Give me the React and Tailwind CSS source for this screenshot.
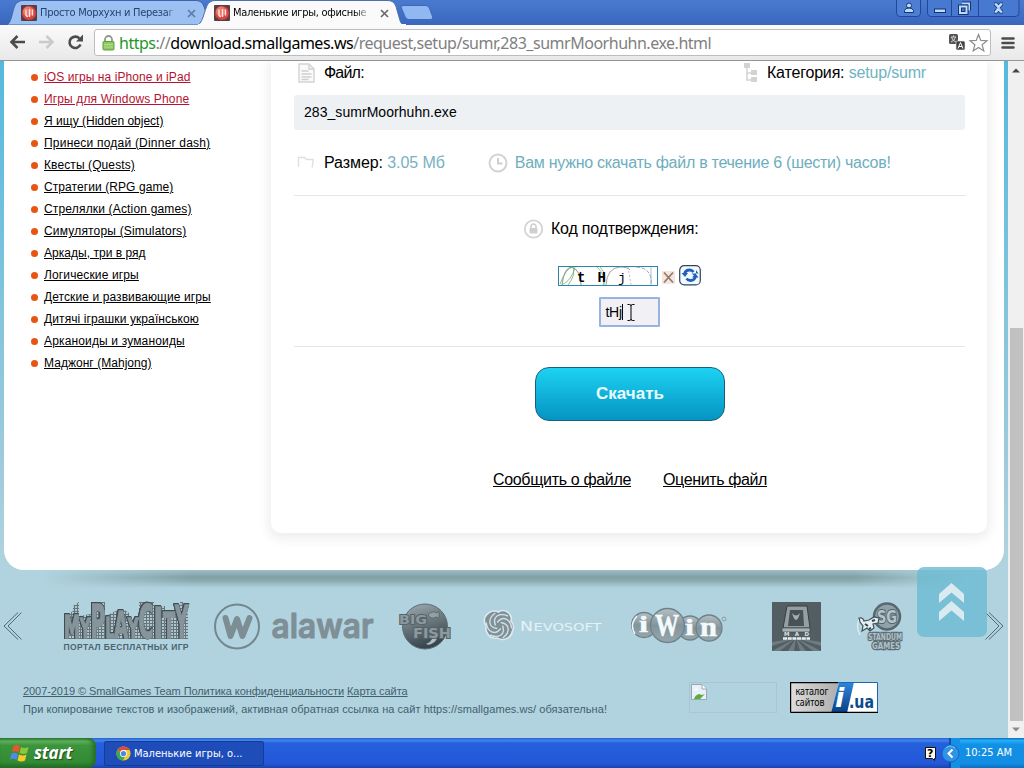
import React from "react";

const ui = "font-['DejaVu_Sans_Condensed','DejaVu_Sans',sans-serif] [font-stretch:condensed]";

const categories = [
  ["iOS игры на iPhone и iPad", "text-[#b5122f] tracking-[0.08px]"],
  ["Игры для Windows Phone", "text-[#b5122f] tracking-[0.14px]"],
  ["Я ищу (Hidden object)", "text-black"],
  ["Принеси подай (Dinner dash)", "text-black tracking-[0.21px]"],
  ["Квесты (Quests)", "text-black tracking-[0.1px]"],
  ["Стратегии (RPG game)", "text-black tracking-[0.08px]"],
  ["Стрелялки (Action games)", "text-black tracking-[0.17px]"],
  ["Симуляторы (Simulators)", "text-black tracking-[0.18px]"],
  ["Аркады, три в ряд", "text-black tracking-[0.03px]"],
  ["Логические игры", "text-black tracking-[0.13px]"],
  ["Детские и развивающие игры", "text-black tracking-[0.09px]"],
  ["Дитячі іграшки українською", "text-black tracking-[0.1px]"],
  ["Арканоиды и зуманоиды", "text-black tracking-[0.15px]"],
  ["Маджонг (Mahjong)", "text-black tracking-[0.04px]"],
];

function Favicon() {
  return (
    <svg width="16" height="16" viewBox="0 0 16 16" className="shrink-0">
      <rect width="16" height="16" rx="1" fill="#5c3c45" />
      <circle cx="8" cy="8" r="7" fill="#d8473f" />
      <circle cx="7" cy="6.5" r="5" fill="#ee8a7c" opacity=".75" />
      <path d="M5 4.500v5q0 2 2 2M8.500 4v8M11.500 4.500v6" stroke="#ffe3dc" strokeWidth="1.400" fill="none" />
    </svg>
  );
}

function Cross({ color }) {
  return (
    <svg width="9" height="9" viewBox="0 0 9 9" className="shrink-0">
      <path d="M1 1l7 7M8 1L1 8" stroke={color} strokeWidth="1.700" />
    </svg>
  );
}

function TitleBar() {
  return (
    <div className="relative h-[25px] shrink-0 overflow-hidden bg-gradient-to-b from-[#4a7ad0] to-[#3a66be]">
      <svg width="1024" height="25" className="absolute left-0 top-0">
        <path d="M7 25C13 22 12 4 18 2q2-1.500 5-1.500H196q6 0 8 6l6 18.500z" fill="#9dc0f2" stroke="#3c65ae" strokeWidth="1" />
        <path d="M401 7q0-1.500 3-1.500h22q2.500 0 3.500 3l3 8q1 3-2 3H409q-3 0-4-3z" fill="#8fb9f0" stroke="#3f69b5" />
        <path d="M198 25C204 22 205 4 210 2q2-1.500 5-1.500H388q6 0 8 6l4 14q1 4.500 6 4.500z" fill="#fafafa" stroke="#4c70ad" strokeWidth="1" />
        <rect x="198" y="24" width="208" height="2" fill="#fafafa" />
        <g fill="none" stroke="#22479a">
          <path d="M896.500 0v13q0 3.500 3.500 3.500h17q3.500 0 3.500-3.500V0" fill="#4d7ed4" />
          <path d="M927.500 0v13q0 3.500 3.500 3.500h84q4 0 4-3.500V0M951.500 0v16M978.500 0v16" fill="#4879d0" />
        </g>
        <g fill="#b9dcff" stroke="#16316e" strokeWidth="1">
          <circle cx="909" cy="5.500" r="2.500" />
          <path d="M904.500 12.500v-2q1-2.500 4.500-2.500t4.500 2.500v2z" />
          <rect x="934.500" y="9" width="11" height="3.500" />
        </g>
        <g fill="none" strokeLinejoin="miter">
          <path d="M962 3.500h7v7" stroke="#16316e" strokeWidth="4" />
          <path d="M962 3.500h7v7" stroke="#b9dcff" strokeWidth="2" />
          <rect x="960" y="6.500" width="6.500" height="6.500" stroke="#16316e" strokeWidth="4" />
          <rect x="960" y="6.500" width="6.500" height="6.500" stroke="#b9dcff" strokeWidth="2" />
          <path d="M994 4h2.500l2 2.500 2-2.500h2.500M994 12h2.500l2-2.500 2 2.500h2.500M995.500 4.500l6 7M1001.500 4.500l-6 7" stroke="#16316e" strokeWidth="3" />
          <path d="M994.500 4h2l2 2.500 2-2.500h2M994.500 12h2l2-2.500 2 2.500h2M995.500 4.500l6 7M1001.500 4.500l-6 7" stroke="#b9dcff" strokeWidth="1.500" />
        </g>
      </svg>
      <div className={"relative flex h-[26px] items-center pl-[21px] text-[11px] tracking-[-0.28px] " + ui}>
        <Favicon />
        <span className="ml-[3px] w-[137px] overflow-hidden whitespace-nowrap text-[#23446f] [mask-image:linear-gradient(90deg,#000_92%,transparent)]">Просто Морхухн и Перезаг</span>
        <span className="ml-[10px]"><Cross color="#5c7ca8" /></span>
        <span className="ml-[18px]"><Favicon /></span>
        <span className="ml-[3px] w-[138px] overflow-hidden whitespace-nowrap text-black [mask-image:linear-gradient(90deg,#000_88%,transparent)]">Маленькие игры, офисные</span>
        <span className="ml-[9px]"><Cross color="#6b6b6b" /></span>
      </div>
    </div>
  );
}

function Toolbar() {
  return (
    <div className="flex h-[36px] shrink-0 items-center border-b border-[#949494] bg-gradient-to-b from-[#fafafa] to-[#e9e9e9] pl-[9px]">
      <svg width="76" height="22" viewBox="0 0 76 22" className="shrink-0">
        <path d="M16 10H3M8.500 4L2.500 10l6 6" fill="none" stroke="#4c4c4c" strokeWidth="2.600" />
        <path d="M30 10H43M37.500 4l6 6-6 6" fill="none" stroke="#cbcbcb" strokeWidth="2.600" />
        <path d="M71.500 12.500A5.700 5.700 0 1 1 70.500 6.500" fill="none" stroke="#4c4c4c" strokeWidth="2.600" />
        <path d="M74 2.500v7h-7z" fill="#4c4c4c" />
      </svg>
      <div className="ml-[9px] flex h-[27px] w-[897px] items-center rounded-[3px] border border-[#bdbdbd] bg-white pl-[7px]">
        <svg width="13" height="16" viewBox="0 0 13 16" className="shrink-0">
          <path d="M3 8V4.500a3.500 3.500 0 0 1 7 0V8" fill="none" stroke="#8e9a8a" strokeWidth="1.800" />
          <rect x="1" y="6.500" width="11" height="8.500" rx="1" fill="#8cc95f" stroke="#5f9c43" />
          <path d="M2 9.500h9M2 12h9" stroke="#b4e08f" />
        </svg>
        <span className="ml-[4px] w-[829px] whitespace-nowrap font-['Noto_Sans',sans-serif] text-[16px] leading-[24px] tracking-[-0.48px] text-[#808080]">
          <span className="text-[#23952c]">https</span>://<span className="text-black">download.smallgames.ws</span>/request,setup/sumr,283_sumrMoorhuhn.exe.html
        </span>
        <svg width="42" height="20" viewBox="0 0 42 20" className="shrink-0">
          <rect x="1" y="1" width="9" height="10" rx="1.500" fill="#555" />
          <path d="M3 4h5M5.500 2.500v1.500M7.500 4q-1 4-4.500 5M3.500 4q1 4 4.500 5" stroke="#ddd" strokeWidth=".9" fill="none" />
          <rect x="8" y="8" width="9" height="9" rx="1.500" fill="#444" stroke="#eee" strokeWidth=".6" />
          <path d="M10 15.500l2.500-6 2.500 6M11 13.500h3" stroke="#fff" strokeWidth="1" fill="none" />
          <path d="M30.500 1.500l2.300 5.900 6.200.3-4.900 4 1.700 6.200-5.300-3.500-5.300 3.500 1.700-6.200-4.900-4 6.200-.3z" fill="#fff" stroke="#8d8d8d" strokeWidth="1.200" />
        </svg>
      </div>
      <svg width="14" height="14" viewBox="0 0 14 14" className="ml-[10px]">
        <path d="M1.500 2.500h11M1.500 7h11M1.500 11.500h11" stroke="#4c4c4c" strokeWidth="2.500" strokeLinecap="round" />
      </svg>
    </div>
  );
}

function Sidebar() {
  return (
    <ul className="w-[267px] shrink-0 pl-[27px] pt-[5px]">
      {categories.map(([name, look]) => (
        <li key={name} className="flex h-[22px] items-center text-[12px]">
          <i className="mr-[6px] size-[7px] rounded-full bg-[#e85512]" />
          <a className={"whitespace-nowrap underline " + look}>{name}</a>
        </li>
      ))}
    </ul>
  );
}

function Card() {
  return (
    <main className="mb-[37px] flex h-[472px] w-[716px] flex-col rounded-b-[10px] bg-white px-[23px] text-[16px] text-black shadow-[0_3px_12px_3px_rgba(0,0,0,0.07)]">
      <div className="flex h-[23px] items-center">
        <svg width="24" height="20" viewBox="0 0 24 20" className="mr-[6px]">
          <path d="M5 1h10l5 5v13H5z" fill="#fafafa" stroke="#d4d4d4" strokeWidth="1.500" />
          <path d="M15 1v5h5M7.500 8h7M7.500 11h10M7.500 14h10M7.500 16.500h7" fill="none" stroke="#cfcfcf" strokeWidth="1.300" />
        </svg>
        <span className="tracking-[-0.8px]">Файл:</span>
        <svg width="16" height="20" viewBox="0 0 16 20" className="ml-auto mr-[8px]">
          <path d="M1 0h6v5H1zM8 7h6v5H8zM8 14h6v5H8z" fill="#d3d3d3" />
          <path d="M4 4v13h5M4 10h5" fill="none" stroke="#d3d3d3" strokeWidth="1.500" />
        </svg>
        <span className="mr-[38px] tracking-[-0.18px]">Категория: <span className="text-[#6fb3c1]">setup/sumr</span></span>
      </div>
      <div className="mt-[11px] flex h-[35px] w-[671px] items-center rounded-[3px] bg-[#edf1f4] pl-[10px] text-[14px] tracking-[0.05px]">283_sumrMoorhuhn.exe</div>
      <div className="mt-[19px] flex h-[28px] items-center">
        <svg width="24" height="20" viewBox="0 0 24 20" className="mr-[6px]">
          <path d="M4.500 14V4.500h6l2 2h6.500v3l-1 5" fill="none" stroke="#dedede" strokeWidth="1.300" />
        </svg>
        <span className="tracking-[-0.08px]">Размер: <span className="text-[#78b1c0]">3.05 Мб</span></span>
        <svg width="20" height="20" viewBox="0 0 20 20" className="ml-[43px] mr-[7px]">
          <circle cx="10" cy="10" r="8.500" fill="#fff" stroke="#d3d3d3" strokeWidth="2" />
          <path d="M10 5v5.500h4.500" fill="none" stroke="#cfcfcf" strokeWidth="2" />
        </svg>
        <span className="tracking-[-0.27px] text-[#6eaebd]">Вам нужно скачать файл в течение 6 (шести) часов!</span>
      </div>
      <div className="mt-[18px] h-px w-[672px] bg-[#e6e6e6]" />
      <div className="mt-[20px] flex h-[26px] items-center pl-[229px]">
        <svg width="20" height="20" viewBox="0 0 20 20" className="mr-[8px]">
          <circle cx="10.500" cy="10" r="8.700" fill="#fff" stroke="#d4d4d4" strokeWidth="1.800" />
          <rect x="6.500" y="9" width="8" height="5.500" rx="1" fill="#cfcfcf" />
          <path d="M8 9V7.500a2.500 2.500 0 0 1 5 0V9" fill="none" stroke="#cfcfcf" strokeWidth="1.500" />
        </svg>
        <span className="tracking-[-0.22px]">Код подтверждения:</span>
      </div>
      <div className="mt-[22px] flex h-[23px] items-center pl-[264px]">
        <svg width="100" height="20" viewBox="0 0 100 20">
          <rect x=".5" y=".5" width="99" height="19" fill="#fff" stroke="#2c83ad" />
          <g fill="none" strokeWidth=".8">
            <path d="M4 19Q6 1 14 1q9 4 9 18" stroke="#777" />
            <path d="M2 18Q8 2 15 1q3 8-5 18M4 19Q14 14 17 1" stroke="#6fae72" />
            <path d="M48 19Q49 2 62 1q8 0 10 3" stroke="#888" />
            <path d="M42 1q8 8 3 18M39 1q9 8 7 18" stroke="#79b57c" />
            <path d="M70 1l3 18" stroke="#aaa" strokeDasharray="2 2" />
            <path d="M78 1q17 1 15 18" stroke="#888" strokeDasharray="4 1.500" />
            <path d="M93 1v18" stroke="#88b7d5" />
          </g>
          <g fontFamily="Liberation Mono, monospace" fontSize="14" fill="#000">
            <text x="19" y="16" fontWeight="700">t</text>
            <text x="39.500" y="16" fontWeight="700">H</text>
            <text x="60" y="16" fontSize="13">j</text>
          </g>
        </svg>
        <svg width="13" height="15" viewBox="0 0 13 15" className="ml-[4px] mt-[4px]">
          <rect width="13" height="13" y="1" fill="#f6e7de" />
          <path d="M2 2.500l9 10M11 2.500l-9 10" stroke="#927b6e" strokeWidth="1.800" />
        </svg>
        <svg width="22" height="21" viewBox="0 0 22 21" className="ml-[4px]">
          <rect x=".7" y=".7" width="20.600" height="19.200" rx="4.500" fill="#f5f8fd" stroke="#30455f" strokeWidth="1.200" />
          <path d="M5.500 9Q6.500 5 10.500 5q2.500 0 4 2M16.500 11.500Q15.500 15.500 11.500 15.500q-2.500 0-4-2" fill="none" stroke="#1c62bd" strokeWidth="2.800" />
          <path d="M2.500 8h6.500L6 12zM12.500 8.500h7L17 5v7z" fill="#1c62bd" />
          <path d="M13 12.500h6.500L16.500 8.500z" fill="#1c62bd" />
        </svg>
      </div>
      <div className="mt-[10px] flex h-[30px] w-[61px] items-center self-center rounded-[1px] border-2 border-[#98b3e0] bg-[#f0f0f5] pl-[5px] text-[14px]">
        <span className="tracking-[-0.3px]">tHj</span>
        <i className="h-[16px] w-px bg-black" />
        <svg width="8" height="17" viewBox="0 0 8 17" className="ml-[4px] shrink-0">
          <path d="M.5.5h2q1.500 0 1.500 1.500 0-1.500 1.500-1.500h2M4 2v13M.5 16.500h2Q4 16.500 4 15q0 1.500 1.500 1.500h2" fill="none" stroke="#000" />
        </svg>
      </div>
      <div className="mt-[19px] h-px w-[671px] bg-[#e6e6e6]" />
      <button className="ml-[2px] mt-[20px] h-[54px] w-[190px] self-center rounded-[14px] border border-[#17627b] bg-gradient-to-b from-[#1dd2f2] to-[#0594c3] text-[17px] font-bold text-[#e8fbff]">Скачать</button>
      <div className="mt-[48px] flex h-[22px] items-center pl-[199px] underline">
        <a className="tracking-[-0.33px]">Сообщить о файле</a>
        <a className="ml-[32px] tracking-[-0.38px]">Оценить файл</a>
      </div>
    </main>
  );
}

function Chevrons({ flip }) {
  return (
    <svg width="19" height="30" viewBox="0 0 19 30" className={"shrink-0 " + (flip ? "rotate-180" : "")}>
      <path d="M15 1.500L1 15l14 13.500M18.500 1.500L5 15l13.500 13.500" fill="none" stroke="#4e6a76" strokeWidth="1" />
    </svg>
  );
}

function Logos() {
  return (
    <div className="flex h-[60px] items-center pl-[3px]">
      <Chevrons />
      <svg width="128" height="52" viewBox="0 0 128 52" className="ml-[41px] shrink-0 overflow-visible">
        <defs>
          <pattern id="windows" width="3" height="3" patternUnits="userSpaceOnUse">
            <rect width="3" height="3" fill="#66757b" />
            <rect width="2" height="2" fill="#b0c6ce" />
          </pattern>
        </defs>
        <path d="M1 39V17l9-6v-5l6-4v14l12-2V2h14v15l8-5 10-3 6 4v6h10V2h15v4h11v7h15V2h3v10h5v27z" fill="url(#windows)" />
        <g
          fontFamily="DejaVu Sans, sans-serif"
          fontWeight="700"
          fill="#86959b"
          stroke="#86959b"
          strokeWidth="1.600"
          className="[filter:drop-shadow(0.6px_0_0_#414e54)_drop-shadow(-0.6px_0_0_#414e54)_drop-shadow(0_-0.5px_0_#414e54)]"
        >
          <text x="1" y="38" fontSize="32" textLength="16" lengthAdjust="spacingAndGlyphs">M</text>
          <text x="17" y="38" fontSize="27" textLength="10.500" lengthAdjust="spacingAndGlyphs">Y</text>
          <text x="27.500" y="38" fontSize="47" textLength="15" lengthAdjust="spacingAndGlyphs">P</text>
          <text x="42.500" y="38" fontSize="28" textLength="8.500" lengthAdjust="spacingAndGlyphs">L</text>
          <text x="51" y="38" fontSize="37" textLength="14" lengthAdjust="spacingAndGlyphs">A</text>
          <text x="65" y="38" fontSize="27" textLength="10.500" lengthAdjust="spacingAndGlyphs">Y</text>
          <text x="75.500" y="38" fontSize="46" textLength="15" lengthAdjust="spacingAndGlyphs">C</text>
          <text x="90.500" y="38" fontSize="43" textLength="9.500" lengthAdjust="spacingAndGlyphs">I</text>
          <text x="100" y="38" fontSize="36" textLength="12" lengthAdjust="spacingAndGlyphs">T</text>
          <text x="112" y="38" fontSize="44" textLength="13.500" lengthAdjust="spacingAndGlyphs">Y</text>
        </g>
        <text x=".5" y="50" fontFamily="Liberation Sans, sans-serif" fontWeight="700" fontSize="8.500" textLength="125" fill="#4b6370">ПОРТАЛ БЕСПЛАТНЫХ ИГР</text>
      </svg>
      <svg width="162" height="48" viewBox="0 0 162 48" className="ml-[22px] shrink-0">
        <circle cx="24" cy="24.500" r="22" fill="none" stroke="#73878f" strokeWidth="2" />
        <path d="M12.500 16l5 18 6.500-17 5.500 17 7-18" fill="none" stroke="#7d8d94" strokeWidth="6" strokeLinecap="round" strokeLinejoin="round" />
        <text x="58.500" y="36" fontFamily="Inter, sans-serif" fontWeight="600" fontSize="34" textLength="102" lengthAdjust="spacingAndGlyphs" fill="#7e8f97" stroke="#7e8f97" strokeWidth="1" strokeLinejoin="round">alawar</text>
      </svg>
      <svg width="54" height="48" viewBox="0 0 54 48" className="ml-[23px] shrink-0 overflow-visible">
        <defs>
          <linearGradient id="ball" x1="0" y1="0" x2=".3" y2="1">
            <stop offset="0" stopColor="#a0aeb3" />
            <stop offset=".5" stopColor="#6b787e" />
            <stop offset="1" stopColor="#39464d" />
          </linearGradient>
        </defs>
        <circle cx="27" cy="24.500" r="22.500" fill="url(#ball)" stroke="#5d6b71" />
        <path d="M28 42q9-3 7-16 8 10 0 15-4 3-7 1z" fill="#b0bfc4" />
        <g fontFamily="DejaVu Sans, sans-serif" fontWeight="700" fill="#8c999e" stroke="#56646a" strokeWidth="2" paintOrder="stroke">
          <text x="1" y="22" fontSize="13" textLength="28" lengthAdjust="spacingAndGlyphs">BIG</text>
          <text x="15" y="36" fontSize="14" textLength="38" lengthAdjust="spacingAndGlyphs">FISH</text>
        </g>
        <path d="M30 13q4-5 9-2l2-2v7l-3-1q-5 3-8-2z" fill="#93a1a6" stroke="#55636a" strokeWidth=".8" />
      </svg>
      <svg width="120" height="34" viewBox="0 0 120 34" className="ml-[31px] shrink-0">
        <path d="M15.500 3q4-3 9 0 5 4 3.500 9 4 4 1.500 10-1 6-7 8-5 1.500-8-1-6 1-9-3-4-5-2-9Q0 13 2 8q4-6 9-6 3 0 4.500 1z" fill="#809097" stroke="#dbeaf0" strokeWidth="1.600" />
        <g fill="none" stroke="#d0dfe5" strokeWidth="1.400">
          <path d="M12.500 16.500C9 8 16 3 25 7" />
          <path d="M12.500 16.500C9 8 16 3 25 7" transform="rotate(60 16 16.500)" />
          <path d="M12.500 16.500C9 8 16 3 25 7" transform="rotate(120 16 16.500)" />
          <path d="M12.500 16.500C9 8 16 3 25 7" transform="rotate(180 16 16.500)" />
          <path d="M12.500 16.500C9 8 16 3 25 7" transform="rotate(240 16 16.500)" />
          <path d="M12.500 16.500C9 8 16 3 25 7" transform="rotate(300 16 16.500)" />
        </g>
        <g fontFamily="DejaVu Sans, sans-serif" fill="#e6f1f5">
          <text x="37" y="22" fontSize="14" textLength="13" lengthAdjust="spacingAndGlyphs">N</text>
          <text x="50.500" y="22" fontSize="11" textLength="68" lengthAdjust="spacingAndGlyphs">EVOSOFT</text>
        </g>
      </svg>
      <svg width="97" height="38" viewBox="0 0 97 38" className="ml-[28px] shrink-0">
        <defs>
          <linearGradient id="bubble" x1="0" y1="0" x2="0" y2="1">
            <stop offset="0" stopColor="#b4bfc3" />
            <stop offset=".5" stopColor="#82949b" />
            <stop offset="1" stopColor="#97a6ac" />
          </linearGradient>
        </defs>
        <g fill="url(#bubble)" stroke="#6f828a" strokeWidth="1.300">
          <circle cx="13" cy="18" r="12.500" /><circle cx="59" cy="21" r="12" /><circle cx="78" cy="21" r="13" /><circle cx="36.500" cy="18.500" r="17" />
        </g>
        <path d="M4 27q-6-9 2-18" fill="none" stroke="#eef6f8" strokeWidth="1.500" />
        <g fontFamily="Liberation Serif, serif" fontWeight="700" fill="#f4fafb" stroke="#f4fafb" strokeWidth=".5">
          <text x="8" y="25" fontSize="24" textLength="9" lengthAdjust="spacingAndGlyphs">i</text>
          <text x="24" y="29" fontSize="31" textLength="24" lengthAdjust="spacingAndGlyphs">W</text>
          <text x="54" y="28" fontSize="24" textLength="9" lengthAdjust="spacingAndGlyphs">i</text>
          <text x="69" y="28.500" fontSize="27" textLength="17" lengthAdjust="spacingAndGlyphs">n</text>
        </g>
        <circle cx="93" cy="12" r="2" fill="none" stroke="#7d929b" strokeWidth=".8" />
      </svg>
      <svg width="49" height="49" viewBox="0 0 49 49" className="ml-[44px] shrink-0">
        <rect width="49" height="49" fill="#535e62" />
        <path d="M24 36L0 49h8zM24 36L16 49h6zM24 36l4 13h6zM24 36l17 13h8zM24 36L0 40v4zM24 36l25 4v4z" fill="#6e7b80" />
        <path d="M15 4h20l3 22H11z" fill="#939fa3" stroke="#353f43" />
        <path d="M18 8h13l1 16H16z" fill="#485256" />
        <path d="M10 26h28v4H10z" fill="#a7b1b4" stroke="#3d474b" strokeWidth=".7" />
        <path d="M20 11q4 5 8 0-2 7-4 7t-4-7" fill="#a3afb3" />
        <text x="12" y="34" fontFamily="DejaVu Sans, sans-serif" fontWeight="700" fontSize="5.500" textLength="25" fill="#d7e0e3">MAD</text>
        <path d="M11 36.500h27" stroke="#e7eef0" strokeWidth="2.500" strokeDasharray="4 .7" />
      </svg>
      <svg width="46" height="50" viewBox="0 0 46 50" className="ml-[36px] shrink-0 overflow-visible">
        <circle cx="30" cy="15.500" r="13" fill="#8fa1a9" stroke="#59686f" strokeWidth="2.500" />
        <text x="20" y="22" fontFamily="DejaVu Sans, sans-serif" fontWeight="700" fontSize="18" textLength="20" lengthAdjust="spacingAndGlyphs" fill="#b3c5cb" stroke="#54636b" strokeWidth="2" paintOrder="stroke">SG</text>
        <path d="M3 16Q-2 25 3 34" fill="none" stroke="#edf6f9" />
        <path d="M2 17q4-1 5 3l5-1 5-3 5 1-1 5-5 1 1 4-4 3-3-3-5 3 1-5-3-4z" fill="#e4eef1" stroke="#41515a" strokeWidth="1.200" />
        <path d="M8 23l3 2m4-5l3-1m-6 9l2-1" stroke="#35454d" strokeWidth="2" />
        <g fontFamily="DejaVu Sans, sans-serif" fontWeight="700" fontSize="8" fill="#b2c2c8" stroke="#5d6e76" strokeWidth="2.400" paintOrder="stroke">
          <text x="11" y="39" textLength="34" lengthAdjust="spacingAndGlyphs">STANDUM</text>
          <text x="15" y="48" textLength="28" lengthAdjust="spacingAndGlyphs">GAMES</text>
        </g>
      </svg>
      <span className="ml-[82px]"><Chevrons flip /></span>
    </div>
  );
}

function SiteFooter() {
  return (
    <div className="flex h-[60px] pl-[23px] text-[11px] text-[#435f6e]">
      <div className="w-[666px] whitespace-nowrap pt-px leading-[18px]">
        <div className="tracking-[-0.07px]"><a className="underline">2007-2019 © SmallGames Team Политика конфиденциальности</a> <a className="underline">Карта сайта</a></div>
        <div className="tracking-[0.055px]">При копирование текстов и изображений, активная обратная ссылка на сайт https://smallgames.ws/ обязательна!</div>
      </div>
      <div className="mt-px h-[31px] w-[88px] border border-[#a8c7d2] pl-px pt-px">
        <svg width="16" height="16" viewBox="0 0 16 16">
          <path d="M.5.5H11l4.500 4.500v10.500H.5z" fill="#e7f0fb" stroke="#9aa7ad" />
          <path d="M11 .5V5h4.500" fill="#fff" stroke="#9aa7ad" />
          <path d="M3 15q1-4 5-5l3 1 3-1-5 5z" fill="#5cad39" />
          <path d="M3 6q2-3 4 0z" fill="#fff" />
        </svg>
      </div>
      <svg width="88" height="31" viewBox="0 0 88 31" className="ml-[13px] mt-px">
        <defs>
          <linearGradient id="plate"><stop offset="0" stopColor="#dedede" /><stop offset="1" stopColor="#adadad" /></linearGradient>
          <linearGradient id="stripe" x1="0" y1="0" x2="0" y2="1"><stop offset="0" stopColor="#2e86e0" /><stop offset="1" stopColor="#063f86" /></linearGradient>
        </defs>
        <rect width="88" height="31" fill="#fff" />
        <path d="M0 0h49l-8 31H0z" fill="url(#plate)" />
        <path d="M49 0h15l-7 31H41z" fill="url(#stripe)" />
        <path d="M.5 30.500V.5H48M.5 30.500H88" stroke="#000" strokeWidth="1.400" fill="none" />
        <path d="M48 .5h39.500V30" stroke="#1c66ad" fill="none" />
        <g fontFamily="Noto Sans, sans-serif" fontSize="10.500" fill="#000">
          <text x="5.500" y="13" textLength="33" lengthAdjust="spacingAndGlyphs">каталог</text>
          <text x="5.500" y="24" textLength="29" lengthAdjust="spacingAndGlyphs">сайтов</text>
        </g>
        <text x="45" y="25" fontFamily="DejaVu Sans, sans-serif" fontWeight="700" fontStyle="italic" fontSize="27" fill="#fff">i</text>
        <text x="59" y="26" fontFamily="DejaVu Sans, sans-serif" fontWeight="700" fontSize="17" textLength="25" lengthAdjust="spacingAndGlyphs" fill="#0c4b8c">.ua</text>
      </svg>
    </div>
  );
}

function Scrollbar() {
  return (
    <div className="flex w-[16px] shrink-0 flex-col items-center bg-[#f0f0f0] pb-[6px] pt-[7px]">
      <svg width="8" height="5" viewBox="0 0 8 5"><path d="M0 4.500L4 .5l4 4z" fill="#454545" /></svg>
      <div className="mt-[255px] h-[393px] w-[13px] bg-[#c1c1c1]" />
      <svg width="8" height="5" viewBox="0 0 8 5" className="mt-auto"><path d="M0 .5l4 4 4-4z" fill="#8a8a8a" /></svg>
    </div>
  );
}

function Taskbar() {
  return (
    <div className="flex h-[30px] shrink-0 bg-[linear-gradient(#2a62cf,#3f83ee_8%,#2560dc_18%,#2357d8_85%,#1a43b0)] text-white">
      <div className="flex w-[96px] items-center rounded-r-[8px] bg-[linear-gradient(#2f7a31,#5fb35c_10%,#3c943c_25%,#328c33_80%,#236b25)] pl-[10px] shadow-[inset_-3px_0_4px_#246b2b]">
        <svg width="20" height="20" viewBox="0 0 20 20">
          <path d="M3.500 3Q7 1 10 3.500L8.500 9.500Q5.500 7.500 2 9z" fill="#e8562a" />
          <path d="M11 4q3 2 7.500 0L17 10q-3.500 2-7.500 0z" fill="#8cc63c" />
          <path d="M1.500 10.500q3.500-1.500 6.500.5L6.500 17Q3.500 15 0 16.500z" fill="#5288e8" />
          <path d="M9 11.500q4 2 7.500 0L15 17.500q-3.500 2-7.500 0z" fill="#f7cb2d" />
        </svg>
        <span className="ml-[4px] font-['Open_Sans',sans-serif] text-[17px] font-bold italic leading-[20px] tracking-[-0.2px] [text-shadow:1px_1px_1px_#1e4d1e]">start</span>
      </div>
      <div className={"ml-[8px] mt-[3px] flex h-[25px] w-[160px] items-center rounded-[2px] border border-[#173c96] bg-[#1e4db9] pl-[11px] text-[11px] " + ui}>
        <svg width="15" height="15" viewBox="0 0 16 16" className="mr-[3px] shrink-0">
          <circle cx="8" cy="8" r="7.500" fill="#f2c82e" />
          <path d="M8 8L1.500 4.200A7.500 7.500 0 0 1 14.500 4.300H8z" fill="#dd4b3e" />
          <path d="M8 8L1.500 4.200A7.500 7.500 0 0 0 7.500 15.500L10.500 9z" fill="#3fa652" />
          <circle cx="8" cy="8" r="3.700" fill="#fff" /><circle cx="8" cy="8" r="2.800" fill="#4a86e8" />
        </svg>
        <span className="whitespace-nowrap pt-px">Маленькие игры, о...</span>
      </div>
      <svg width="36" height="30" viewBox="0 0 36 30" className="ml-auto">
        <path d="M26 0h10v30H26z" fill="#1590e4" />
        <path d="M26 0v30" stroke="#123c9a" strokeWidth="1.500" />
        <path d="M1.500 9.500h10v11h-1v2l-2-2h-7z" fill="#fffdeb" stroke="#111" />
        <text x="3" y="19" fontFamily="DejaVu Sans, sans-serif" fontWeight="700" fontSize="11" fill="#000">?</text>
        <circle cx="26.500" cy="15.500" r="8.500" fill="#2f94e8" stroke="#1961bd" />
        <path d="M22 10q4-4 9 0" stroke="#85c6fa" fill="none" />
        <path d="M28.500 11.500l-4 4 4 4" fill="none" stroke="#fff" strokeWidth="2" />
      </svg>
      <div className={"flex w-[64px] items-center bg-[linear-gradient(#0b69c8,#24b0f6_8%,#1290e6_22%,#118de3_85%,#0c6cc0)] pl-[5px] text-[11px] " + ui}>10:25 AM</div>
    </div>
  );
}

export default function App() {
  return (
    <div className="flex h-[768px] w-[1024px] flex-col overflow-hidden font-['Liberation_Sans',Arial,sans-serif]">
      <TitleBar />
      <Toolbar />
      <div className="flex h-[677px] shrink-0">
        <div className="relative w-[1008px] bg-[linear-gradient(#55b9de,#9fcbdc_60%,#b1d3df_75%)]">
          <div className="mx-[4px] flex h-[509px] overflow-hidden rounded-b-[20px] bg-white">
            <Sidebar />
            <Card />
          </div>
          <div className="mx-[44px] h-[18px] bg-[linear-gradient(#9dbfca,#7f9fa3_40%,#8aabb1_60%,transparent)] [mask-image:linear-gradient(90deg,transparent,#000_16%,#000_88%,transparent)]" />
          <div className="mt-[8px]"><Logos /></div>
          <div className="mt-[25px]"><SiteFooter /></div>
          <div className="absolute left-[917px] top-[506px] flex size-[70px] items-center justify-center rounded-[7px] bg-[#6bbad2]/80">
            <svg width="28" height="40" viewBox="0 0 28 40">
              <path d="M1 12L13.500 1 26 12v9L13.500 10.500 1 21zM1 30l12.500-11L26 30v9L13.500 28.500 1 39z" fill="#d9eaf1" />
            </svg>
          </div>
        </div>
        <Scrollbar />
      </div>
      <Taskbar />
    </div>
  );
}
